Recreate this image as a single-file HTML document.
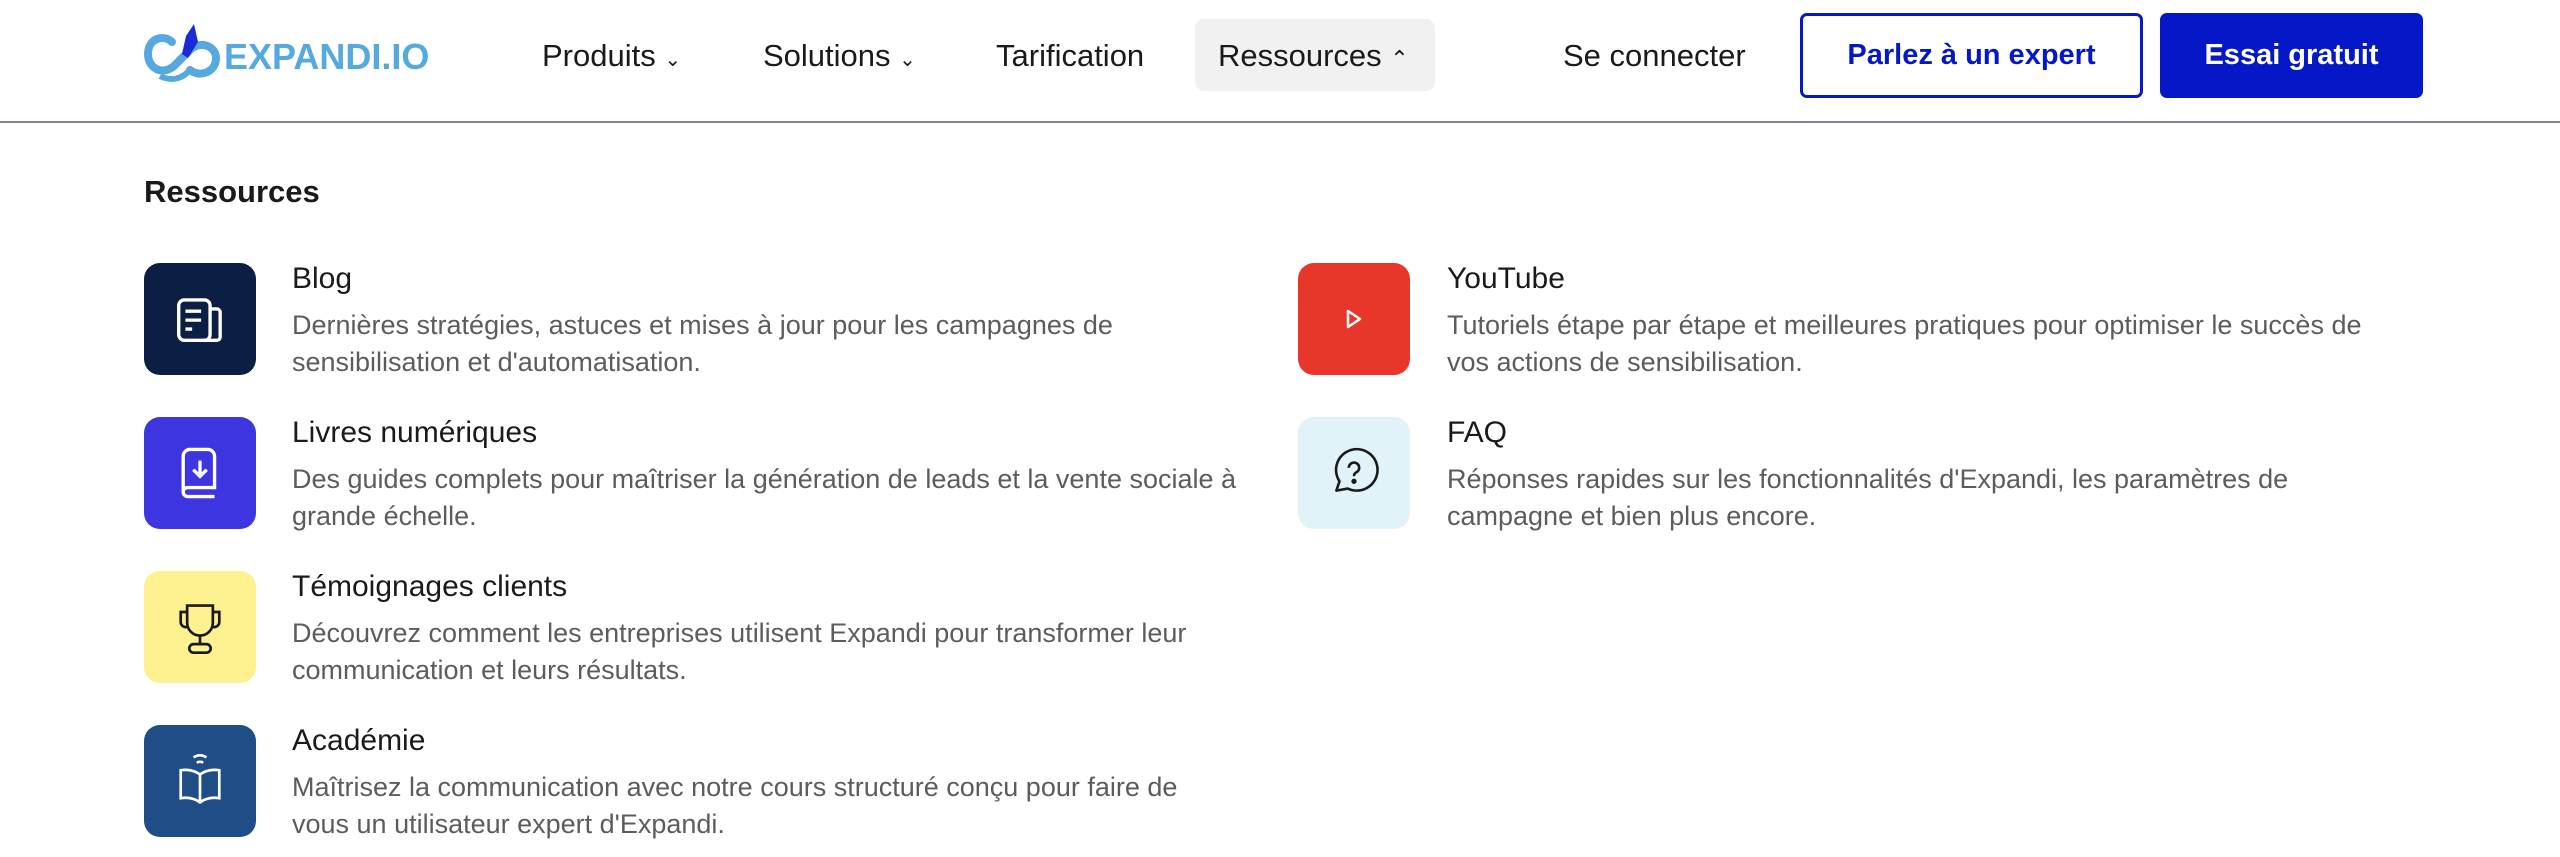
<!DOCTYPE html>
<html><head><meta charset="utf-8"><style>
*{margin:0;padding:0;box-sizing:border-box}
body{width:2560px;height:857px;background:#fff;font-family:"Liberation Sans",sans-serif;position:relative;overflow:hidden;color:#1a1a1a}
.a{position:absolute;white-space:nowrap}
.nav{font-size:31px;color:#1a1a1a;top:38px}
.hr{position:absolute;left:0;top:121px;width:2560px;height:2px;background:#7d8398}
.box{position:absolute;width:112px;height:112px;border-radius:16px;display:flex;align-items:center;justify-content:center}
.t{position:absolute;font-size:30px;color:#1a1a1a;white-space:nowrap}
.d{position:absolute;font-size:27px;line-height:37px;color:#5c5c5c;white-space:nowrap}
.btn{position:absolute;border-radius:7px;font-weight:bold;font-size:29px;display:flex;align-items:center;justify-content:center}
</style></head><body>
<svg class="a" style="left:142px;top:20px" width="80" height="66" viewBox="0 0 80 66">
<path d="M30 22 C22 14 6 18 6 34 C6 48 20 56 32 46 L48 30 C58 20 74 26 74 38 C74 52 58 58 48 50" fill="none" stroke="#55a9df" stroke-width="8" stroke-linecap="round"/>
<path d="M18 56 C30 62 40 58 46 52" fill="none" stroke="#55a9df" stroke-width="6"/>
<path d="M52 4 L44 16 L40 34 L46 38 L56 22 Z" fill="#1a2ad6"/>
</svg>
<div class="a" style="left:224px;top:36px;font-size:36px;font-weight:bold;color:#55a9df">EXPANDI.IO</div>
<div class="a nav" style="left:542px">Produits <span style="font-size:20px">&#8964;</span></div>
<div class="a nav" style="left:763px">Solutions <span style="font-size:20px">&#8964;</span></div>
<div class="a nav" style="left:996px">Tarification</div>
<div class="a" style="left:1195px;top:19px;width:240px;height:72px;background:#f1f1f1;border-radius:9px"></div>
<div class="a nav" style="left:1218px">Ressources <span style="font-size:22px">&#8963;</span></div>
<div class="a nav" style="left:1563px">Se connecter</div>
<div class="btn" style="left:1800px;top:13px;width:343px;height:85px;border:3px solid #0418c8;color:#0418c8">Parlez à un expert</div>
<div class="btn" style="left:2160px;top:13px;width:263px;height:85px;background:#0418c8;color:#fff">Essai gratuit</div>
<div class="hr"></div>
<div class="a" style="left:144px;top:174px;font-size:31px;font-weight:bold;color:#1a1a1a">Ressources</div>

<div class="box" style="left:144px;top:263px;background:#0b1f44"><svg width="56" height="56" viewBox="0 0 50 50" fill="none" stroke="#fff" stroke-width="3"><rect x="6" y="8" width="28" height="36" rx="5"/><path d="M34 16h6a3 3 0 0 1 3 3v22a3 3 0 0 1-3 3H28M12 18h14M12 26h14M12 34h6"/></svg></div>
<div class="t" style="left:292px;top:262px">Blog</div>
<div class="d" style="left:292px;top:307px">Dernières stratégies, astuces et mises à jour pour les campagnes de<br>sensibilisation et d'automatisation.</div>

<div class="box" style="left:144px;top:417px;background:#3d35e0"><svg width="56" height="56" viewBox="0 0 50 50" fill="none" stroke="#fff" stroke-width="3"><path d="M14 4h18a6 6 0 0 1 6 6v28H14a4 4 0 0 0 0 8h24M14 46a4 4 0 0 1-4-4V10a6 6 0 0 1 6-6M25 14v14M19 22l6 6 6-6"/></svg></div>
<div class="t" style="left:292px;top:416px">Livres numériques</div>
<div class="d" style="left:292px;top:461px">Des guides complets pour maîtriser la génération de leads et la vente sociale à<br>grande échelle.</div>

<div class="box" style="left:144px;top:571px;background:#fdf28f"><svg width="60" height="60" viewBox="0 0 56 56" fill="none" stroke="#1a1a1a" stroke-width="2.5"><path d="M16 8h24v16a12 12 0 0 1-24 0zM16 14H10v10a5 5 0 0 0 6 4M40 14h6v10a5 5 0 0 1-6 4M28 36v8"/><rect x="18" y="44" width="20" height="8" rx="4"/></svg></div>
<div class="t" style="left:292px;top:570px">Témoignages clients</div>
<div class="d" style="left:292px;top:615px">Découvrez comment les entreprises utilisent Expandi pour transformer leur<br>communication et leurs résultats.</div>

<div class="box" style="left:144px;top:725px;background:#1f4e87"><svg width="54" height="60" viewBox="0 0 50 56" fill="none" stroke="#fff" stroke-width="2.5"><path d="M19 6a10 10 0 0 1 12 0M22 11a5 5 0 0 1 6 0M25 22c-5-4-12-5-18-4v26c6-1 13 0 18 4c5-4 12-5 18-4V18c-6-1-13 0-18 4zM25 22v26"/></svg></div>
<div class="t" style="left:292px;top:724px">Académie</div>
<div class="d" style="left:292px;top:769px">Maîtrisez la communication avec notre cours structuré conçu pour faire de<br>vous un utilisateur expert d'Expandi.</div>

<div class="box" style="left:1298px;top:263px;background:#e8372a"><svg width="20" height="22" viewBox="0 0 20 22" fill="none" stroke="#fff" stroke-width="2.5"><path d="M4 3l12 8-12 8z" stroke-linejoin="round"/></svg></div>
<div class="t" style="left:1447px;top:262px">YouTube</div>
<div class="d" style="left:1447px;top:307px">Tutoriels étape par étape et meilleures pratiques pour optimiser le succès de<br>vos actions de sensibilisation.</div>

<div class="box" style="left:1298px;top:417px;background:#e2f2f9"><svg width="56" height="56" viewBox="0 0 54 54" fill="none" stroke="#1a1a1a" stroke-width="2.5"><path d="M10 44l3-9a20 20 0 1 1 8 7z" stroke-linejoin="round"/><path d="M22 22a5 5 0 1 1 7 4.5c-1.5 .8-2 2-2 3.5"/><circle cx="27" cy="35" r="1.3" fill="#1a1a1a"/></svg></div>
<div class="t" style="left:1447px;top:416px">FAQ</div>
<div class="d" style="left:1447px;top:461px">Réponses rapides sur les fonctionnalités d'Expandi, les paramètres de<br>campagne et bien plus encore.</div>
</body></html>
